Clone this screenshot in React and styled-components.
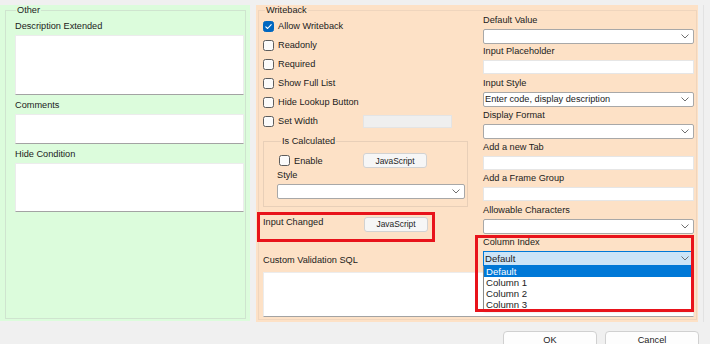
import React from 'react';
import styled, { createGlobalStyle } from 'styled-components';

const GREEN = '#dcfcdc';
const PEACH = '#fde1c6';
const RED = '#e8131b';
const FONT = `"Liberation Sans", Arial, sans-serif`;

const GlobalStyle = createGlobalStyle`
  html, body { margin: 0; padding: 0; background: #f0f0f0; }
  body { font-family: ${FONT}; font-size: 9.2px; color: #1b1b1b; }
  * { box-sizing: border-box; }
`;

const Window = styled.div`
  width: 710px;
  height: 344px;
  overflow: hidden;
  background: #f0f0f0;
  display: flex;
  flex-direction: column;
`;

const Main = styled.div`
  display: flex;
  padding-top: 5px;
  height: 322px;
  flex: none;
`;

const Panel = styled.div`
  background: ${p => p.$tone};
  width: ${p => p.$w}px;
  margin-left: ${p => p.$ml || 0}px;
  margin-bottom: ${p => p.$mb || 0}px;
  padding: 0 ${p => p.$pr}px 2px ${p => p.$pl}px;
  display: flex;
  flex-direction: column;
  flex: none;
`;

const Gutter = styled.div`
  flex: 1;
  margin-left: 5px;
  border-left: 1px solid #e2e2e2;
`;

const GroupBox = styled.div`
  border: 1px solid ${p => p.$line};
  margin-top: ${p => p.$mt}px;
  flex: ${p => (p.$grow ? 1 : 'none')};
  width: ${p => (p.$w ? `${p.$w}px` : 'auto')};
  display: flex;
  flex-direction: column;
  padding: 0 ${p => p.$pr || 0}px ${p => p.$pb || 0}px ${p => p.$pl || 0}px;
`;

const GroupTitle = styled.div`
  align-self: flex-start;
  margin: -6px 0 ${p => p.$mb}px ${p => p.$ml}px;
  padding: 0 1px;
  line-height: 11px;
  background: ${p => p.$bg};
`;

const Label = styled.div`
  line-height: 11px;
  margin-top: ${p => p.$mt || 0}px;
  margin-bottom: ${p => p.$mb ?? 3}px;
  white-space: nowrap;
`;

const TextArea = styled.div`
  background: #fff;
  border: 1px solid #ececec;
  border-bottom-color: #a3a3a3;
  height: ${p => p.$h}px;
  flex: none;
`;

const GreenBody = styled.div`
  display: flex;
  flex-direction: column;
`;

/* Writeback */
const WriteGrid = styled.div`
  display: grid;
  grid-template-columns: 210px 211px;
  column-gap: 10px;
  row-gap: 3px;
`;

const LeftStack = styled.div`
  padding-top: 2.5px;
  display: flex;
  flex-direction: column;
`;

const RightStack = styled.div`
  padding-top: 0.5px;
  display: flex;
  flex-direction: column;
`;

const CheckRow = styled.div`
  height: 19px;
  display: flex;
  align-items: center;
`;

const CheckArea = styled.div`
  display: flex;
  align-items: center;
  width: ${p => (p.$w ? `${p.$w}px` : 'auto')};
  flex: none;
`;

const CheckBox = styled.span`
  width: 11px;
  height: 11px;
  flex: none;
  border-radius: 2.5px;
  border: 1px solid ${p => (p.$checked ? '#0067c0' : '#5c5c5c')};
  background: ${p => (p.$checked ? '#0067c0' : '#fbfbfb')};
  display: flex;
  align-items: center;
  justify-content: center;
  margin-right: 4px;
`;

const DisabledInput = styled.div`
  width: 89px;
  height: 13px;
  background: #efefef;
  border: 1px solid #e4e4e4;
`;

const EnableRow = styled.div`
  display: flex;
  align-items: center;
  margin-top: 6.5px;
  padding-left: 2px;
  height: 15px;
`;

const ScriptButton = styled.button`
  width: 64px;
  height: 15px;
  padding: 0;
  font-family: ${FONT};
  font-size: 8.4px;
  color: #1b1b1b;
  background: #f6f6f6;
  border: 1px solid #d2d2d2;
  border-radius: 3px;
  flex: none;
`;

const InputChangedRow = styled.div`
  margin: 4.5px 0 0 -6px;
  width: 178px;
  height: 30px;
  border: 3px solid ${RED};
  padding: 2px 3px;
  display: flex;
  align-items: flex-start;
`;

const RowLabel = styled.span`
  width: ${p => p.$w}px;
  line-height: 11px;
  flex: none;
`;

const Field = styled.div`
  height: 31.75px;
  display: flex;
  flex-direction: column;
  position: relative;
  flex: none;
`;

const SelectBox = styled.div`
  height: 15px;
  flex: none;
  background: ${p => (p.$active ? '#cce4f7' : '#fff')};
  border: 1px solid ${p => (p.$active ? '#0078d7' : '#a8a8a8')};
  border-radius: ${p => (p.$active ? 0 : 2)}px;
  display: flex;
  align-items: center;
  justify-content: space-between;
  padding: 0 4px 0 1px;
  line-height: 11px;
  font-size: ${p => (p.$active ? '9.6px' : '9.2px')};
  white-space: nowrap;
`;

const TextInput = styled.div`
  height: 14px;
  flex: none;
  background: #fff;
  border: 1px solid #e6e6e6;
`;

const Highlight = styled.div`
  position: absolute;
  left: -8px;
  right: 0;
  top: -2.25px;
  height: 77px;
  border: 3px solid ${RED};
  pointer-events: none;
  z-index: 3;
`;

const DropList = styled.div`
  position: absolute;
  top: 29px;
  left: 0;
  right: 2px;
  background: #fff;
  border: 1px solid #8a8a8a;
  border-top: none;
  z-index: 2;
  box-shadow: 1px 1px 2px rgba(0, 0, 0, 0.15);
`;

const DropItem = styled.div`
  line-height: 11px;
  height: 11px;
  padding-left: 2px;
  font-size: 9.6px;
  background: ${p => (p.$selected ? '#0078d7' : 'transparent')};
  color: ${p => (p.$selected ? '#fff' : '#1b1b1b')};
`;

const SqlBox = styled(TextArea)`
  grid-column: 1 / -1;
`;

const Footer = styled.div`
  display: flex;
  justify-content: flex-end;
  gap: 8px;
  padding: 9px 11px 0 0;
`;

const DialogButton = styled.button`
  width: 94px;
  height: 19px;
  flex: none;
  font-family: ${FONT};
  font-size: 9.2px;
  line-height: 11px;
  color: #1b1b1b;
  background: #fdfdfd;
  border: 1px solid #d0d0d0;
  border-radius: 4px;
  padding: 0;
`;

const Chevron = () => (
  <svg width="8" height="5" viewBox="0 0 8 5">
    <path d="M0.5 0.5 L4 4 L7.5 0.5" fill="none" stroke="#6f6f6f" strokeWidth="1" />
  </svg>
);

const CheckMark = () => (
  <svg width="9" height="9" viewBox="0 0 9 9">
    <path d="M1.8 4.8 L3.6 6.5 L7.2 2.6" fill="none" stroke="#fff" strokeWidth="1.1" strokeLinecap="round" strokeLinejoin="round" />
  </svg>
);

const Check = ({ label, checked, width }) => (
  <CheckArea $w={width}>
    <CheckBox $checked={checked}>{checked && <CheckMark />}</CheckBox>
    <span>{label}</span>
  </CheckArea>
);

const Select = ({ value, active }) => (
  <SelectBox $active={active}>
    <span>{value}</span>
    <Chevron />
  </SelectBox>
);

const rightFields = [
  { label: 'Default Value', kind: 'select' },
  { label: 'Input Placeholder', kind: 'input' },
  { label: 'Input Style', kind: 'select', value: 'Enter code, display description' },
  { label: 'Display Format', kind: 'select' },
  { label: 'Add a new Tab', kind: 'input' },
  { label: 'Add a Frame Group', kind: 'input' },
  { label: 'Allowable Characters', kind: 'select' },
];

const checks = [
  { label: 'Allow Writeback', checked: true },
  { label: 'Readonly' },
  { label: 'Required' },
  { label: 'Show Full List' },
  { label: 'Hide Lookup Button' },
];

export default function App() {
  return (
    <Window>
      <GlobalStyle />
      <Main>
        <Panel $tone={GREEN} $w={250} $pl={5} $pr={4} $mb={1}>
          <GroupBox $line="#cfe4cf" $mt={5} $grow $pl={9} $pr={1}>
            <GroupTitle $bg={GREEN} $ml={1} $mb={5}>Other</GroupTitle>
            <GreenBody>
              <Label>Description Extended</Label>
              <TextArea $h={60} />
              <Label $mt={5}>Comments</Label>
              <TextArea $h={30} />
              <Label $mt={5}>Hide Condition</Label>
              <TextArea $h={49} />
            </GreenBody>
          </GroupBox>
        </Panel>

        <Panel $tone={PEACH} $w={442} $ml={6} $pl={2} $pr={1}>
          <GroupBox $line="#efd5bd" $mt={5} $grow $pl={4} $pr={2}>
            <GroupTitle $bg={PEACH} $ml={2} $mb={-2}>Writeback</GroupTitle>
            <WriteGrid>
              <LeftStack>
                {checks.map(c => (
                  <CheckRow key={c.label}>
                    <Check label={c.label} checked={c.checked} />
                  </CheckRow>
                ))}
                <CheckRow>
                  <Check label="Set Width" width={100} />
                  <DisabledInput />
                </CheckRow>

                <GroupBox $line="#e8cfb8" $mt={10} $w={205} $pl={13} $pr={2} $pb={7}>
                  <GroupTitle $bg={PEACH} $ml={4} $mb={0}>Is Calculated</GroupTitle>
                  <EnableRow>
                    <Check label="Enable" width={84} />
                    <ScriptButton>JavaScript</ScriptButton>
                  </EnableRow>
                  <Label $mt={1.5} $mb={3.5}>Style</Label>
                  <Select value="" />
                </GroupBox>

                <InputChangedRow>
                  <RowLabel $w={101}>Input Changed</RowLabel>
                  <ScriptButton>JavaScript</ScriptButton>
                </InputChangedRow>

                <Label $mt={13.5} $mb={0}>Custom Validation SQL</Label>
              </LeftStack>

              <RightStack>
                {rightFields.map(f => (
                  <Field key={f.label}>
                    <Label>{f.label}</Label>
                    {f.kind === 'select' ? <Select value={f.value || ''} /> : <TextInput />}
                  </Field>
                ))}
                <Field>
                  <Label>Column Index</Label>
                  <Select value="Default" active />
                  <DropList>
                    <DropItem $selected>Default</DropItem>
                    <DropItem>Column 1</DropItem>
                    <DropItem>Column 2</DropItem>
                    <DropItem>Column 3</DropItem>
                  </DropList>
                  <Highlight />
                </Field>
              </RightStack>

              <SqlBox $h={45} />
            </WriteGrid>
          </GroupBox>
        </Panel>
        <Gutter />
      </Main>
      <Footer>
        <DialogButton>OK</DialogButton>
        <DialogButton>Cancel</DialogButton>
      </Footer>
    </Window>
  );
}
